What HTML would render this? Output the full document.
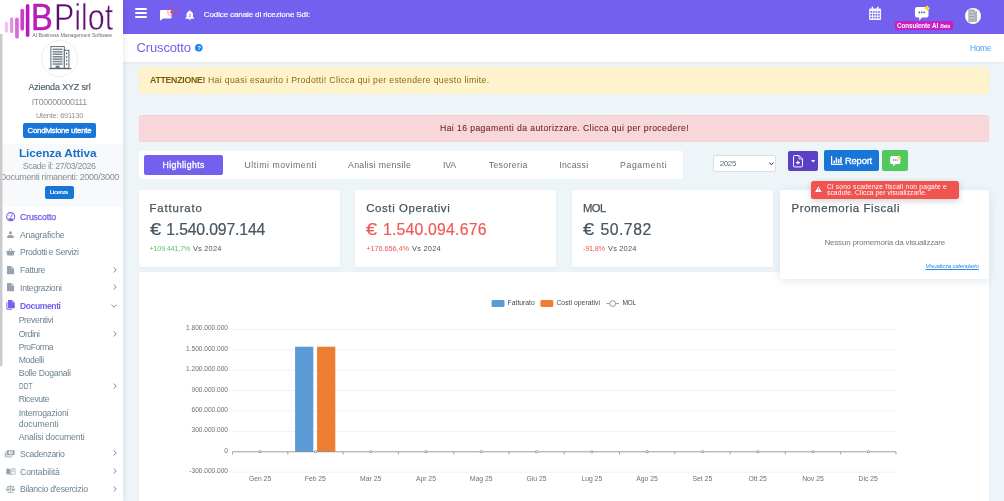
<!DOCTYPE html>
<html lang="it">
<head>
<meta charset="utf-8">
<title>BPilot - Cruscotto</title>
<style>

*{box-sizing:border-box;margin:0;padding:0}
html,body{width:1004px;height:501px;overflow:hidden;background:#eef5f9;font-family:"Liberation Sans",sans-serif}
#app{position:relative;width:1004px;height:501px;overflow:hidden;background:#eef5f9;will-change:transform}
.t{position:absolute;white-space:nowrap;display:block}
.abs{position:absolute}
.card{position:absolute;background:#fff;border-radius:2px;box-shadow:0 1px 3px rgba(120,140,160,.10)}
svg{position:absolute;overflow:visible}

</style>
</head>
<body>
<div id="app">
<main>
<div class="card" style="left:139px;top:272.4px;width:850.4px;height:240px"></div>
<svg style="left:0;top:0" width="1004" height="501" viewBox="0 0 1004 501"><line x1="232.5" y1="329.4" x2="896.0" y2="329.4" stroke="#ebeff6" stroke-width="0.85"/><line x1="232.5" y1="349.8" x2="896.0" y2="349.8" stroke="#ebeff6" stroke-width="0.85"/><line x1="232.5" y1="370.2" x2="896.0" y2="370.2" stroke="#ebeff6" stroke-width="0.85"/><line x1="232.5" y1="390.6" x2="896.0" y2="390.6" stroke="#ebeff6" stroke-width="0.85"/><line x1="232.5" y1="411.0" x2="896.0" y2="411.0" stroke="#ebeff6" stroke-width="0.85"/><line x1="232.5" y1="431.4" x2="896.0" y2="431.4" stroke="#ebeff6" stroke-width="0.85"/><line x1="232.5" y1="472.2" x2="896.0" y2="472.2" stroke="#ebeff6" stroke-width="0.85"/><rect x="295.1" y="346.7" width="18.2" height="105.1" fill="#5b9bd5"/><rect x="317.1" y="346.7" width="18.2" height="105.1" fill="#ed7d31"/><line x1="232.5" y1="451.8" x2="896.0" y2="451.8" stroke="#7d8790" stroke-width="0.8"/><line x1="232.5" y1="451.8" x2="232.5" y2="454.6" stroke="#7d8790" stroke-width="0.7"/><line x1="287.8" y1="451.8" x2="287.8" y2="454.6" stroke="#7d8790" stroke-width="0.7"/><line x1="343.1" y1="451.8" x2="343.1" y2="454.6" stroke="#7d8790" stroke-width="0.7"/><line x1="398.4" y1="451.8" x2="398.4" y2="454.6" stroke="#7d8790" stroke-width="0.7"/><line x1="453.7" y1="451.8" x2="453.7" y2="454.6" stroke="#7d8790" stroke-width="0.7"/><line x1="509.0" y1="451.8" x2="509.0" y2="454.6" stroke="#7d8790" stroke-width="0.7"/><line x1="564.2" y1="451.8" x2="564.2" y2="454.6" stroke="#7d8790" stroke-width="0.7"/><line x1="619.5" y1="451.8" x2="619.5" y2="454.6" stroke="#7d8790" stroke-width="0.7"/><line x1="674.8" y1="451.8" x2="674.8" y2="454.6" stroke="#7d8790" stroke-width="0.7"/><line x1="730.1" y1="451.8" x2="730.1" y2="454.6" stroke="#7d8790" stroke-width="0.7"/><line x1="785.4" y1="451.8" x2="785.4" y2="454.6" stroke="#7d8790" stroke-width="0.7"/><line x1="840.7" y1="451.8" x2="840.7" y2="454.6" stroke="#7d8790" stroke-width="0.7"/><line x1="896.0" y1="451.8" x2="896.0" y2="454.6" stroke="#7d8790" stroke-width="0.7"/><circle cx="260.1" cy="451.7" r="1.15" fill="#fff" stroke="#7a8088" stroke-width="0.75"/><circle cx="315.4" cy="451.7" r="1.15" fill="#fff" stroke="#7a8088" stroke-width="0.75"/><circle cx="370.7" cy="451.7" r="1.15" fill="#fff" stroke="#7a8088" stroke-width="0.75"/><circle cx="426.0" cy="451.7" r="1.15" fill="#fff" stroke="#7a8088" stroke-width="0.75"/><circle cx="481.3" cy="451.7" r="1.15" fill="#fff" stroke="#7a8088" stroke-width="0.75"/><circle cx="536.6" cy="451.7" r="1.15" fill="#fff" stroke="#7a8088" stroke-width="0.75"/><circle cx="591.9" cy="451.7" r="1.15" fill="#fff" stroke="#7a8088" stroke-width="0.75"/><circle cx="647.2" cy="451.7" r="1.15" fill="#fff" stroke="#7a8088" stroke-width="0.75"/><circle cx="702.5" cy="451.7" r="1.15" fill="#fff" stroke="#7a8088" stroke-width="0.75"/><circle cx="757.8" cy="451.7" r="1.15" fill="#fff" stroke="#7a8088" stroke-width="0.75"/><circle cx="813.1" cy="451.7" r="1.15" fill="#fff" stroke="#7a8088" stroke-width="0.75"/><circle cx="868.4" cy="451.7" r="1.15" fill="#fff" stroke="#7a8088" stroke-width="0.75"/><rect x="491.6" y="300" width="12.9" height="7.1" rx="1.4" fill="#5b9bd5"/><rect x="540.4" y="300" width="12.9" height="7.1" rx="1.4" fill="#ed7d31"/><line x1="606.4" y1="303.6" x2="619" y2="303.6" stroke="#7a8088" stroke-width="0.8"/><circle cx="612.7" cy="303.6" r="2.9" fill="#fff" stroke="#7a8088" stroke-width="0.8"/></svg>
<span class="t" style="left:186.07px;top:325.01px;font-size:6.55px;line-height:6.55px;color:#6e7079;">1.800.000.000</span>
<span class="t" style="left:186.07px;top:346.00px;font-size:6.55px;line-height:6.55px;color:#6e7079;">1.500.000.000</span>
<span class="t" style="left:186.07px;top:366.01px;font-size:6.55px;line-height:6.55px;color:#6e7079;">1.200.000.000</span>
<span class="t" style="left:191.52px;top:387.00px;font-size:6.55px;line-height:6.55px;color:#6e7079;">900.000.000</span>
<span class="t" style="left:191.52px;top:407.00px;font-size:6.55px;line-height:6.55px;color:#6e7079;">600.000.000</span>
<span class="t" style="left:191.52px;top:427.01px;font-size:6.55px;line-height:6.55px;color:#6e7079;">300.000.000</span>
<span class="t" style="left:224.28px;top:448.00px;font-size:6.55px;line-height:6.55px;color:#6e7079;">0</span>
<span class="t" style="left:189.35px;top:468.01px;font-size:6.55px;line-height:6.55px;color:#6e7079;">-300.000.000</span>
<span class="t" style="left:248.89px;top:476.01px;font-size:6.8px;line-height:6.8px;color:#6e7079;">Gen 25</span>
<span class="t" style="left:304.74px;top:476.01px;font-size:6.8px;line-height:6.8px;color:#6e7079;">Feb 25</span>
<span class="t" style="left:360.04px;top:476.01px;font-size:6.8px;line-height:6.8px;color:#6e7079;">Mar 25</span>
<span class="t" style="left:415.90px;top:476.01px;font-size:6.8px;line-height:6.8px;color:#6e7079;">Apr 25</span>
<span class="t" style="left:469.87px;top:476.01px;font-size:6.8px;line-height:6.8px;color:#6e7079;">Mag 25</span>
<span class="t" style="left:526.48px;top:476.01px;font-size:6.8px;line-height:6.8px;color:#6e7079;">Giu 25</span>
<span class="t" style="left:581.39px;top:476.01px;font-size:6.8px;line-height:6.8px;color:#6e7079;">Lug 25</span>
<span class="t" style="left:636.30px;top:476.01px;font-size:6.8px;line-height:6.8px;color:#6e7079;">Ago 25</span>
<span class="t" style="left:692.54px;top:476.01px;font-size:6.8px;line-height:6.8px;color:#6e7079;">Set 25</span>
<span class="t" style="left:748.40px;top:476.01px;font-size:6.8px;line-height:6.8px;color:#6e7079;">Ott 25</span>
<span class="t" style="left:802.18px;top:476.01px;font-size:6.8px;line-height:6.8px;color:#6e7079;">Nov 25</span>
<span class="t" style="left:858.61px;top:476.01px;font-size:6.8px;line-height:6.8px;color:#6e7079;">Dic 25</span>
<span class="t" style="left:507.60px;top:300.01px;font-size:6.8px;line-height:6.8px;color:#444a50;letter-spacing:-0.003px;">Fatturato</span>
<span class="t" style="left:556.40px;top:300.01px;font-size:6.8px;line-height:6.8px;color:#444a50;letter-spacing:0.031px;">Costi operativi</span>
<span class="t" style="left:622.40px;top:300.01px;font-size:6.64px;line-height:6.64px;color:#444a50;letter-spacing:-0.337px;">MOL</span>
<div class="card" style="left:139.0px;top:190px;width:201.0px;height:77px"></div>
<div class="card" style="left:355.4px;top:190px;width:201.0px;height:77px"></div>
<div class="card" style="left:572.0px;top:190px;width:200.8px;height:77px"></div>
<span class="t" style="left:149.50px;top:203.01px;font-size:11.4px;line-height:11.4px;color:#46555f;letter-spacing:0.843px;-webkit-text-stroke:0.25px #46555f;">Fatturato</span>
<span class="t" style="left:149.50px;top:222.00px;font-size:15.8px;line-height:15.8px;color:#46555f;transform:scaleX(1.2651);transform-origin:0 0;-webkit-text-stroke:0.2px #46555f;">€</span>
<span class="t" style="left:166.30px;top:222.00px;font-size:15.8px;line-height:15.8px;color:#46555f;letter-spacing:-0.170px;-webkit-text-stroke:0.2px #46555f;">1.540.097.144</span>
<span class="t" style="left:149.50px;top:245.00px;font-size:7.4px;line-height:7.4px;color:#5fc46a;letter-spacing:-0.301px;">+109.441,7%</span>
<span class="t" style="left:193.00px;top:245.00px;font-size:7.4px;line-height:7.4px;color:#46555f;letter-spacing:0.198px;">Vs 2024</span>
<span class="t" style="left:366.20px;top:203.01px;font-size:11.4px;line-height:11.4px;color:#46555f;letter-spacing:0.631px;-webkit-text-stroke:0.25px #46555f;">Costi Operativi</span>
<span class="t" style="left:366.00px;top:222.00px;font-size:15.8px;line-height:15.8px;color:#ee5a58;transform:scaleX(1.2651);transform-origin:0 0;-webkit-text-stroke:0.2px #ee5a58;">€</span>
<span class="t" style="left:382.90px;top:222.00px;font-size:15.8px;line-height:15.8px;color:#ee5a58;letter-spacing:0.213px;-webkit-text-stroke:0.2px #ee5a58;">1.540.094.676</span>
<span class="t" style="left:366.20px;top:245.00px;font-size:7.4px;line-height:7.4px;color:#ee5a58;letter-spacing:-0.091px;">+176.656,4%</span>
<span class="t" style="left:412.00px;top:245.00px;font-size:7.4px;line-height:7.4px;color:#46555f;letter-spacing:0.248px;">Vs 2024</span>
<span class="t" style="left:583.00px;top:203.00px;font-size:11.24px;line-height:11.24px;color:#46555f;letter-spacing:-0.556px;-webkit-text-stroke:0.25px #46555f;">MOL</span>
<span class="t" style="left:582.70px;top:222.00px;font-size:15.8px;line-height:15.8px;color:#46555f;transform:scaleX(1.2651);transform-origin:0 0;-webkit-text-stroke:0.2px #46555f;">€</span>
<span class="t" style="left:600.50px;top:222.00px;font-size:15.8px;line-height:15.8px;color:#46555f;letter-spacing:0.471px;-webkit-text-stroke:0.2px #46555f;">50.782</span>
<span class="t" style="left:583.00px;top:245.00px;font-size:7.4px;line-height:7.4px;color:#ee5a58;letter-spacing:-0.270px;">-91,8%</span>
<span class="t" style="left:608.00px;top:245.00px;font-size:7.4px;line-height:7.4px;color:#46555f;letter-spacing:0.198px;">Vs 2024</span>
<div class="card" style="left:780.2px;top:190px;width:209.2px;height:88.6px;box-shadow:0 2px 8px rgba(90,110,130,.16)"></div>
<span class="t" style="left:791.50px;top:203.01px;font-size:11.4px;line-height:11.4px;color:#46555f;letter-spacing:0.620px;-webkit-text-stroke:0.25px #46555f;">Promemoria Fiscali</span>
<span class="t" style="left:824.50px;top:239.01px;font-size:8px;line-height:8px;color:#6f7c83;letter-spacing:-0.204px;">Nessun promemoria da visualizzare</span>
<span class="t" style="left:925.50px;top:263.00px;font-size:6.2px;line-height:6.2px;color:#2a8be6;letter-spacing:-0.229px;font-style:italic;text-decoration:underline;">Visualizza calendario</span>
<div class="abs" style="left:810.6px;top:180.6px;width:148.3px;height:18px;background:#ef5451;border-radius:2.5px;box-shadow:0 2px 6px rgba(0,0,0,.18)"></div>
<svg style="left:815.2px;top:186.2px" width="6.8" height="6.2" viewBox="0 0 14 13"><path d="M7 0.4 L13.8 12.6 H0.2 Z" fill="#fff"/><rect x="6.3" y="4.4" width="1.4" height="4.4" fill="#ef5451"/><rect x="6.3" y="9.8" width="1.4" height="1.4" fill="#ef5451"/></svg>
<span class="t" style="left:827.00px;top:184.01px;font-size:6.6px;line-height:6.6px;color:#ffffff;letter-spacing:0.239px;">Ci sono scadenze fiscali non pagate e</span>
<span class="t" style="left:827.00px;top:190.00px;font-size:6.6px;line-height:6.6px;color:#ffffff;letter-spacing:0.127px;">scadute. Clicca per visualizzarle.</span>
<div class="abs" style="left:139px;top:67px;width:850.4px;height:27px;background:#fff3cd;border:1px solid #fff0c4;border-radius:2.5px"></div>
<span class="t" style="left:150.00px;top:76.01px;font-size:8.7px;line-height:8.7px;color:#7a5c05;font-weight:700;letter-spacing:-0.236px;">ATTENZIONE!</span>
<span class="t" style="left:208.00px;top:76.01px;font-size:8.7px;line-height:8.7px;color:#8a6a0c;letter-spacing:0.330px;">Hai quasi esaurito i Prodotti! Clicca qui per estendere questo limite.</span>
<div class="abs" style="left:139px;top:115px;width:850.4px;height:26.6px;background:#f8d7da;border:1px solid #f7d0d4;border-radius:2.5px"></div>
<span class="t" style="left:440.00px;top:124.01px;font-size:8.7px;line-height:8.7px;color:#7a2530;letter-spacing:0.380px;-webkit-text-stroke:0.1px #7a2530;">Hai 16 pagamenti da autorizzare. Clicca qui per procedere!</span>
<div class="abs" style="left:139px;top:151.2px;width:543.6px;height:28px;background:#fff;border-radius:2px"></div>
<div class="abs" style="left:144.2px;top:155px;width:79px;height:20.4px;background:#7460ee;border-radius:2px"></div>
<span class="t" style="left:162.50px;top:161.01px;font-size:8.7px;line-height:8.7px;color:#ffffff;letter-spacing:0.410px;-webkit-text-stroke:0.3px #fff;">Highlights</span>
<span class="t" style="left:244.50px;top:161.01px;font-size:8.7px;line-height:8.7px;color:#636f76;letter-spacing:0.547px;">Ultimi movimenti</span>
<span class="t" style="left:348.00px;top:161.01px;font-size:8.7px;line-height:8.7px;color:#636f76;letter-spacing:0.348px;">Analisi mensile</span>
<span class="t" style="left:443.00px;top:161.01px;font-size:8.7px;line-height:8.7px;color:#636f76;letter-spacing:-0.182px;">IVA</span>
<span class="t" style="left:488.70px;top:161.01px;font-size:8.7px;line-height:8.7px;color:#636f76;letter-spacing:0.362px;">Tesoreria</span>
<span class="t" style="left:559.20px;top:161.01px;font-size:8.7px;line-height:8.7px;color:#636f76;letter-spacing:0.314px;">Incassi</span>
<span class="t" style="left:620.00px;top:161.01px;font-size:8.7px;line-height:8.7px;color:#636f76;letter-spacing:0.635px;">Pagamenti</span>
<div class="abs" style="left:712.6px;top:155.4px;width:63.2px;height:16.2px;background:#fff;border:1px solid #d9dee2;border-radius:2px"></div>
<span class="t" style="left:719.70px;top:160.02px;font-size:8.04px;line-height:8.04px;color:#636f76;letter-spacing:-0.403px;">2025</span>
<svg style="left:769.4px;top:161.6px" width="5" height="3.6" viewBox="0 0 10 7"><path d="M1 1 L5 5.4 L9 1" fill="none" stroke="#333" stroke-width="2"/></svg>
<div class="abs" style="left:788.2px;top:151px;width:30px;height:19.6px;background:#5b3fc4;border-radius:2px"></div>
<svg style="left:793.4px;top:154.6px" width="10" height="12.4" viewBox="0 0 20 25"><path d="M3 1 H12 L19 8 V22 A2 2 0 0 1 17 24 H3 A2 2 0 0 1 1 22 V3 A2 2 0 0 1 3 1 Z" fill="none" stroke="#fff" stroke-width="2"/><path d="M12 1 V8 H19" fill="none" stroke="#fff" stroke-width="1.6"/><path d="M10 11.4 V19.4 M6 15.4 H14" stroke="#fff" stroke-width="2.2"/></svg>
<svg style="left:810.8px;top:160.4px" width="4.4" height="2.6" viewBox="0 0 8 5"><path d="M0 0 H8 L4 5 Z" fill="#fff"/></svg>
<div class="abs" style="left:824.2px;top:150px;width:55.1px;height:21.2px;background:#1976d9;border-radius:2px"></div>
<svg style="left:831px;top:156.2px" width="11.8" height="9" viewBox="0 0 24 18"><path d="M1.2 0 V16.8 H24" fill="none" stroke="#fff" stroke-width="2.4"/><rect x="5" y="9" width="3" height="5.4" fill="#fff"/><rect x="9.6" y="3" width="3" height="11.4" fill="#fff"/><rect x="14.2" y="6" width="3" height="8.4" fill="#fff"/><rect x="18.8" y="2" width="3" height="12.4" fill="#fff"/></svg>
<span class="t" style="left:845.00px;top:156.02px;font-size:9.4px;line-height:9.4px;color:#ffffff;letter-spacing:-0.187px;-webkit-text-stroke:0.3px #fff;">Report</span>
<div class="abs" style="left:881.8px;top:150px;width:26px;height:21.2px;background:#52c95f;border-radius:2px"></div>
<svg style="left:889.6px;top:156.0px" width="10.6" height="10.6" viewBox="0 0 27 28"><path d="M4 0 H23 A4 4 0 0 1 27 4 V17 A4 4 0 0 1 23 21 H14 L8.4 27.6 V21 H4 A4 4 0 0 1 0 17 V4 A4 4 0 0 1 4 0 Z" fill="#ffffff"/><circle cx="8.6" cy="10.6" r="1.7" fill="#666"/><circle cx="13.5" cy="10.6" r="1.7" fill="#666"/><circle cx="18.4" cy="10.6" r="1.7" fill="#666"/></svg>
<svg style="left:896.8px;top:154.6px" width="5" height="5" viewBox="0 0 10 10"><path d="M5 0 L6.6 3.4 L10 5 L6.6 6.6 L5 10 L3.4 6.6 L0 5 L3.4 3.4 Z" fill="#ffd43b"/></svg>
</main>
<header class="abs" style="left:123px;top:0;width:881px;height:33.8px;background:#7460ee"></header>
<i class="abs" style="left:135px;top:8.3px;width:11.8px;height:1.7px;background:#fff;border-radius:1px"></i>
<i class="abs" style="left:135px;top:12.2px;width:11.8px;height:1.7px;background:#fff;border-radius:1px"></i>
<i class="abs" style="left:135px;top:16.1px;width:11.8px;height:1.7px;background:#fff;border-radius:1px"></i>
<svg style="left:160px;top:9.5px" width="13" height="11" viewBox="0 0 13 11"><path d="M1 0 H10.6 A1 1 0 0 1 11.6 1 V7.4 A1 1 0 0 1 10.6 8.4 H3 L0 10.8 V1 A1 1 0 0 1 1 0 Z" fill="#fff"/></svg>
<svg style="left:166px;top:5px" width="13" height="13" viewBox="0 0 13 13"><circle cx="6.4" cy="6.5" r="4.6" fill="none" stroke="rgba(240,70,100,.34)" stroke-width="1.7"/><circle cx="5.7" cy="7.1" r="1.55" fill="#f4463f"/></svg>

<svg style="left:185px;top:9.8px" width="9.6" height="10.4" viewBox="0 0 19 21"><path d="M9.5 0.4 A1.5 1.5 0 0 1 11 1.9 V2.6 C14.4 3.4 16 6.2 16 9.6 V14 L18.6 16.6 V17.6 H0.4 V16.6 L3 14 V9.6 C3 6.2 4.6 3.4 8 2.6 V1.9 A1.5 1.5 0 0 1 9.5 0.4 Z M7.4 18.6 H11.6 A2.1 2.1 0 0 1 7.4 18.6 Z" fill="#fff"/><text x="9.5" y="14" font-size="8" font-weight="700" text-anchor="middle" fill="#7460ee" font-family="Liberation Sans, sans-serif">2</text></svg>
<span class="t" style="left:203.80px;top:11.00px;font-size:8px;line-height:8px;color:#ffffff;letter-spacing:-0.114px;-webkit-text-stroke:0.16px #fff;">Codice canale di ricezione SdI:</span>
<svg style="left:869px;top:7.2px" width="12.2" height="13" viewBox="0 0 24 26" opacity=".92"><path d="M5 0.6 A1.6 1.6 0 0 1 8.2 0.6 V3 H15.8 V0.6 A1.6 1.6 0 0 1 19 0.6 V3 H22 A2 2 0 0 1 24 5 V24 A2 2 0 0 1 22 26 H2 A2 2 0 0 1 0 24 V5 A2 2 0 0 1 2 3 H5 Z" fill="#fff"/><rect x="2.6" y="8.4" width="3.2" height="3.2" fill="#7460ee"/><rect x="7.8" y="8.4" width="3.2" height="3.2" fill="#7460ee"/><rect x="13.0" y="8.4" width="3.2" height="3.2" fill="#7460ee"/><rect x="18.2" y="8.4" width="3.2" height="3.2" fill="#7460ee"/><rect x="2.6" y="14.0" width="3.2" height="3.2" fill="#7460ee"/><rect x="7.8" y="14.0" width="3.2" height="3.2" fill="#7460ee"/><rect x="13.0" y="14.0" width="3.2" height="3.2" fill="#7460ee"/><rect x="18.2" y="14.0" width="3.2" height="3.2" fill="#7460ee"/><rect x="2.6" y="19.6" width="3.2" height="3.2" fill="#7460ee"/><rect x="7.8" y="19.6" width="3.2" height="3.2" fill="#7460ee"/><rect x="13.0" y="19.6" width="3.2" height="3.2" fill="#7460ee"/><rect x="18.2" y="19.6" width="3.2" height="3.2" fill="#7460ee"/></svg>
<svg style="left:914.6px;top:6.7px" width="13.5" height="14.0" viewBox="0 0 27 28"><path d="M4 0 H23 A4 4 0 0 1 27 4 V17 A4 4 0 0 1 23 21 H14 L8.4 27.6 V21 H4 A4 4 0 0 1 0 17 V4 A4 4 0 0 1 4 0 Z" fill="#ffffff"/><circle cx="8.6" cy="10.6" r="1.7" fill="#555"/><circle cx="13.5" cy="10.6" r="1.7" fill="#555"/><circle cx="18.4" cy="10.6" r="1.7" fill="#555"/></svg>
<svg style="left:924.4px;top:5.2px" width="6.4" height="6.4" viewBox="0 0 10 10"><path d="M5 0 L6.8 3.2 L10 5 L6.8 6.8 L5 10 L3.2 6.8 L0 5 L3.2 3.2 Z" fill="#ffd92e"/></svg>
<div class="abs" style="left:895.2px;top:21.3px;width:57.6px;height:8.8px;background:#c81fc2;border-radius:1.5px"></div>
<span class="t" style="left:897.10px;top:23.01px;font-size:6.3px;line-height:6.3px;color:#ffffff;font-weight:700;letter-spacing:-0.088px;">Consulente AI</span>
<span class="t" style="left:940.20px;top:25.00px;font-size:4.8px;line-height:4.8px;color:#ffffff;font-weight:700;letter-spacing:-0.113px;font-style:italic;">Beta</span>
<div class="abs" style="left:964.8px;top:7.5px;width:16.5px;height:16.5px;border-radius:50%;background:#fff;overflow:hidden"><svg style="left:3.4px;top:1.4px" width="9.8" height="13.4" viewBox="0 0 10 14"><rect x="0.4" y="0.6" width="6.4" height="12.8" fill="#8f999f"/><rect x="6.8" y="2.2" width="2.6" height="11.2" fill="#aab3b9"/><rect x="1.2" y="1.8" width="4.8" height="0.7" fill="#e4e8ea"/><rect x="1.2" y="3.4" width="4.8" height="0.7" fill="#e4e8ea"/><rect x="1.2" y="5.0" width="4.8" height="0.7" fill="#e4e8ea"/><rect x="1.2" y="6.6" width="4.8" height="0.7" fill="#e4e8ea"/><rect x="1.2" y="8.2" width="4.8" height="0.7" fill="#e4e8ea"/><rect x="1.2" y="9.8" width="4.8" height="0.7" fill="#e4e8ea"/><rect x="1.2" y="11.4" width="4.8" height="0.7" fill="#e4e8ea"/></svg></div>
<div class="abs" style="left:123px;top:33.8px;width:881px;height:28px;background:#fff;box-shadow:0 1px 3px rgba(0,0,0,.05)"></div>
<span class="t" style="left:136.50px;top:41.00px;font-size:13px;line-height:13px;color:#7460ee;letter-spacing:-0.139px;">Cruscotto</span>
<svg style="left:195.3px;top:44.2px" width="7.6" height="7.6" viewBox="0 0 10 10"><circle cx="5" cy="5" r="5" fill="#1a82f0"/></svg>
<span class="t" style="left:197.60px;top:46.01px;font-size:5.6px;line-height:5.6px;color:#ffffff;font-weight:700;">?</span>
<span class="t" style="left:970.00px;top:44.01px;font-size:8.4px;line-height:8.4px;color:#4ba3f0;letter-spacing:-0.295px;">Home</span>
<aside class="abs" style="left:0;top:0;width:123px;height:501px;background:#fff;box-shadow:1px 0 7px rgba(0,0,0,.09)">
<div class="abs" style="left:0;top:0;width:123px;height:40px">
<svg style="left:0;top:0" width="123" height="40" viewBox="0 0 123 40"><rect x="4.90" y="21.80" width="3.00" height="10.60" rx="1.50" fill="#ecbff0"/><rect x="10.10" y="17.20" width="3.10" height="15.80" rx="1.55" fill="#e190e4"/><rect x="15.10" y="17.40" width="3.70" height="21.20" rx="1.85" fill="#d66ad9"/><rect x="20.40" y="8.70" width="3.70" height="21.80" rx="1.85" fill="#c73fca"/><rect x="25.80" y="4.10" width="3.60" height="33.00" rx="1.80" fill="#b61db9"/></svg>
<span class="t" style="left:30.78px;top:0.01px;font-size:36px;line-height:36px;color:#b61db9;transform:scaleX(0.9094);transform-origin:0 0;-webkit-text-stroke:0.5px #b61db9;">B</span>
<span class="t" style="left:53.90px;top:-0.01px;font-size:36.6px;line-height:36.6px;color:#5c0f6e;transform:scaleX(0.8324);transform-origin:0 0;-webkit-text-stroke:0.55px #fff;">Pilot</span>
<span class="t" style="left:32.20px;top:33.02px;font-size:5.3px;line-height:5.3px;color:#6f6f6f;letter-spacing:-0.093px;">AI Business Management Software</span>
</div>
<div class="abs" style="left:41px;top:39.5px;width:37px;height:37px;border-radius:50%;border:1px solid #eeeeee;background:#fff"></div>
<svg style="left:48.6px;top:45.6px" width="22.4" height="23.4" viewBox="0 0 22.4 23.4"><rect x="1.9" y="0.6" width="13.4" height="21.6" fill="#fff" stroke="#4d5d6c" stroke-width="0.9"/><rect x="15.3" y="4.2" width="4.6" height="18" fill="#fff" stroke="#4d5d6c" stroke-width="0.9"/><rect x="3.6" y="2.6" width="10" height="1.5" fill="#4d5d6c" opacity=".75"/><rect x="3.6" y="5.1" width="10" height="1.5" fill="#4d5d6c" opacity=".75"/><rect x="3.6" y="7.5" width="10" height="1.5" fill="#4d5d6c" opacity=".75"/><rect x="3.6" y="10.0" width="10" height="1.5" fill="#4d5d6c" opacity=".75"/><rect x="3.6" y="12.4" width="10" height="1.5" fill="#4d5d6c" opacity=".75"/><rect x="3.6" y="14.8" width="10" height="1.5" fill="#4d5d6c" opacity=".75"/><rect x="3.6" y="17.3" width="10" height="1.5" fill="#4d5d6c" opacity=".75"/><rect x="17" y="6.6" width="1.2" height="1.6" fill="#4d5d6c"/><rect x="17" y="10.2" width="1.2" height="1.6" fill="#4d5d6c"/><rect x="17" y="13.8" width="1.2" height="1.6" fill="#4d5d6c"/><rect x="17" y="17.4" width="1.2" height="1.6" fill="#4d5d6c"/><rect x="6.6" y="19.6" width="4" height="2.6" fill="#4d5d6c" opacity=".8"/><rect x="0" y="22.2" width="22.4" height="1" fill="#4d5d6c"/></svg>
<span class="t" style="left:28.40px;top:83.01px;font-size:9px;line-height:9px;color:#4e5d68;letter-spacing:-0.159px;-webkit-text-stroke:0.15px #4e5d68;">Azienda XYZ srl</span>
<span class="t" style="left:31.80px;top:98.01px;font-size:8.77px;line-height:8.77px;color:#8d9498;letter-spacing:-0.404px;">IT00000000111</span>
<span class="t" style="left:35.90px;top:112.01px;font-size:7.56px;line-height:7.56px;color:#8d9498;letter-spacing:-0.274px;">Utente: 691130</span>
<div class="abs" style="left:22.8px;top:123.4px;width:73.1px;height:14.6px;background:#1976d9;border-radius:2px"></div>
<span class="t" style="left:27.60px;top:127.00px;font-size:7.8px;line-height:7.8px;color:#ffffff;letter-spacing:-0.254px;-webkit-text-stroke:0.3px #fff;">Condivisione utente</span>
<div class="abs" style="left:3px;top:143.6px;width:120px;height:63.3px;background:#f8f9fa"></div>
<span class="t" style="left:19.00px;top:148.01px;font-size:11.8px;line-height:11.8px;color:#1c6fc6;font-weight:700;letter-spacing:-0.102px;">Licenza Attiva</span>
<span class="t" style="left:22.70px;top:162.01px;font-size:8.87px;line-height:8.87px;color:#8a8f93;letter-spacing:-0.398px;">Scade il: 27/03/2026</span>
<span class="t" style="left:-0.30px;top:173.01px;font-size:9px;line-height:9px;color:#8a8f93;letter-spacing:-0.361px;">Documenti rimanenti: 2000/3000</span>
<div class="abs" style="left:45px;top:185.5px;width:29px;height:13px;background:#1976d9;border-radius:2px"></div>
<span class="t" style="left:49.80px;top:190.01px;font-size:5.48px;line-height:5.48px;color:#ffffff;font-weight:700;letter-spacing:-0.287px;">Licenza</span>
<span class="t" style="left:20.00px;top:213.00px;font-size:8.7px;line-height:8.7px;color:#7460ee;letter-spacing:-0.132px;-webkit-text-stroke:0.25px #7460ee;">Cruscotto</span>
<span class="t" style="left:20.00px;top:231.00px;font-size:8.7px;line-height:8.7px;color:#6b8290;letter-spacing:-0.174px;">Anagrafiche</span>
<span class="t" style="left:20.00px;top:248.02px;font-size:8.69px;line-height:8.69px;color:#6b8290;letter-spacing:-0.390px;">Prodotti e Servizi</span>
<span class="t" style="left:20.00px;top:266.01px;font-size:8.7px;line-height:8.7px;color:#6b8290;letter-spacing:-0.367px;">Fatture</span>
<span class="t" style="left:20.00px;top:284.00px;font-size:8.7px;line-height:8.7px;color:#6b8290;letter-spacing:-0.272px;">Integrazioni</span>
<span class="t" style="left:20.00px;top:302.01px;font-size:8.54px;line-height:8.54px;color:#7460ee;font-weight:700;letter-spacing:-0.390px;">Documenti</span>
<span class="t" style="left:18.70px;top:316.01px;font-size:8.7px;line-height:8.7px;color:#6b8290;letter-spacing:-0.381px;">Preventivi</span>
<span class="t" style="left:18.70px;top:330.01px;font-size:8.7px;line-height:8.7px;color:#6b8290;letter-spacing:-0.391px;">Ordini</span>
<span class="t" style="left:18.70px;top:343.00px;font-size:8.47px;line-height:8.47px;color:#6b8290;letter-spacing:-0.407px;">ProForma</span>
<span class="t" style="left:18.70px;top:356.01px;font-size:8.7px;line-height:8.7px;color:#6b8290;letter-spacing:-0.350px;">Modelli</span>
<span class="t" style="left:18.70px;top:369.01px;font-size:8.7px;line-height:8.7px;color:#6b8290;letter-spacing:-0.292px;">Bolle Doganali</span>
<span class="t" style="left:18.70px;top:382.01px;font-size:8.7px;line-height:8.7px;color:#6b8290;transform:scaleX(0.7492);transform-origin:0 0;">DDT</span>
<span class="t" style="left:18.70px;top:395.01px;font-size:8.66px;line-height:8.66px;color:#6b8290;letter-spacing:-0.396px;">Ricevute</span>
<span class="t" style="left:18.70px;top:409.01px;font-size:8.7px;line-height:8.7px;color:#6b8290;letter-spacing:-0.224px;">Interrogazioni</span>
<span class="t" style="left:18.70px;top:420.01px;font-size:8.7px;line-height:8.7px;color:#6b8290;letter-spacing:-0.008px;">documenti</span>
<span class="t" style="left:18.70px;top:433.01px;font-size:8.7px;line-height:8.7px;color:#6b8290;letter-spacing:-0.135px;">Analisi documenti</span>
<span class="t" style="left:20.00px;top:450.00px;font-size:8.7px;line-height:8.7px;color:#6b8290;letter-spacing:-0.347px;">Scadenzario</span>
<span class="t" style="left:20.00px;top:468.00px;font-size:8.7px;line-height:8.7px;color:#6b8290;letter-spacing:-0.123px;">Contabilità</span>
<span class="t" style="left:20.00px;top:485.01px;font-size:8.7px;line-height:8.7px;color:#6b8290;letter-spacing:-0.294px;">Bilancio d'esercizio</span>
<svg style="left:112.8px;top:266.6px" width="4" height="6" viewBox="0 0 4 6"><path d="M0.6 0.5 L3.3 3 L0.6 5.5" fill="none" stroke="#6b8290" stroke-width="0.9"/></svg>
<svg style="left:112.8px;top:284.2px" width="4" height="6" viewBox="0 0 4 6"><path d="M0.6 0.5 L3.3 3 L0.6 5.5" fill="none" stroke="#6b8290" stroke-width="0.9"/></svg>
<svg style="left:112.8px;top:330.6px" width="4" height="6" viewBox="0 0 4 6"><path d="M0.6 0.5 L3.3 3 L0.6 5.5" fill="none" stroke="#6b8290" stroke-width="0.9"/></svg>
<svg style="left:112.8px;top:383.4px" width="4" height="6" viewBox="0 0 4 6"><path d="M0.6 0.5 L3.3 3 L0.6 5.5" fill="none" stroke="#6b8290" stroke-width="0.9"/></svg>
<svg style="left:112.8px;top:449.9px" width="4" height="6" viewBox="0 0 4 6"><path d="M0.6 0.5 L3.3 3 L0.6 5.5" fill="none" stroke="#6b8290" stroke-width="0.9"/></svg>
<svg style="left:112.8px;top:467.9px" width="4" height="6" viewBox="0 0 4 6"><path d="M0.6 0.5 L3.3 3 L0.6 5.5" fill="none" stroke="#6b8290" stroke-width="0.9"/></svg>
<svg style="left:112.8px;top:485.5px" width="4" height="6" viewBox="0 0 4 6"><path d="M0.6 0.5 L3.3 3 L0.6 5.5" fill="none" stroke="#6b8290" stroke-width="0.9"/></svg>
<svg style="left:111.2px;top:304.2px" width="6" height="4" viewBox="0 0 6 4"><path d="M0.5 0.6 L3 3.3 L5.5 0.6" fill="none" stroke="#6b8290" stroke-width="0.9"/></svg>
<svg style="left:5.9px;top:212.1px" width="9.4" height="9.4" viewBox="0 0 18 18"><circle cx="9" cy="9" r="7.8" fill="none" stroke="#7460ee" stroke-width="2"/><path d="M3.4 12.8 C6 11.4 12 11.4 14.6 12.8 C13.6 15.4 11.6 16.4 9 16.4 C6.4 16.4 4.4 15.4 3.4 12.8 Z" fill="#7460ee"/><path d="M9 10.4 L11.6 4.8" stroke="#7460ee" stroke-width="1.7" stroke-linecap="round"/><circle cx="5" cy="7" r="0.9" fill="#7460ee"/><circle cx="13.2" cy="7.4" r="0.9" fill="#7460ee"/></svg>
<svg style="left:6.9px;top:231.2px" width="6.9" height="6.9" viewBox="0 0 14 14"><circle cx="7" cy="3.6" r="3.2" fill="#94a3ad"/><path d="M0.4 14 V11.6 C0.4 9.2 4 8 7 8 C10 8 13.6 9.2 13.6 11.6 V14 Z" fill="#94a3ad"/></svg>
<svg style="left:5.9px;top:248.4px" width="9.0" height="8.0" viewBox="0 0 18 16"><path d="M5 7 L8 1.4 M13 7 L10 1.4" stroke="#94a3ad" stroke-width="1.8" fill="none" stroke-linecap="round"/><path d="M0.4 6 H17.6 V8 H16.8 L15.4 15 H2.6 L1.2 8 H0.4 Z" fill="#94a3ad"/></svg>
<svg style="left:6.9px;top:266.0px" width="7.1" height="8.3" viewBox="0 0 12 14"><path d="M1 0 H7.4 L12 4.6 V13 A1 1 0 0 1 11 14 H1 A1 1 0 0 1 0 13 V1 A1 1 0 0 1 1 0 Z" fill="#94a3ad"/><path d="M7.6 0.6 V4.4 H11.4" fill="none" stroke="#fff" stroke-width="0.9" opacity=".8"/></svg>
<svg style="left:6.9px;top:283.4px" width="7.1" height="8.3" viewBox="0 0 12 14"><path d="M1 0 H7.4 L12 4.6 V13 A1 1 0 0 1 11 14 H1 A1 1 0 0 1 0 13 V1 A1 1 0 0 1 1 0 Z" fill="#94a3ad"/><path d="M7.6 0.6 V4.4 H11.4" fill="none" stroke="#fff" stroke-width="0.9" opacity=".8"/></svg>
<svg style="left:6.0px;top:300.4px" width="8.8" height="10.0" viewBox="0 0 14 16"><path d="M1.4 3.4 V14.8 H10" fill="none" stroke="#7460ee" stroke-width="1.5"/><path d="M4 0 H10 L14 4 V12.4 A0.8 0.8 0 0 1 13.2 13.2 H4 A0.8 0.8 0 0 1 3.2 12.4 V0.8 A0.8 0.8 0 0 1 4 0 Z" fill="#7460ee"/><path d="M10.2 0.6 V3.8 H13.4" fill="none" stroke="#fff" stroke-width="0.9" opacity=".85"/></svg>
<svg style="left:5.2px;top:450.4px" width="9.8" height="7.4" viewBox="0 0 20 15"><rect x="3.4" y="0.4" width="16.2" height="10" rx="1" fill="#94a3ad"/><ellipse cx="11.5" cy="5.4" rx="4.4" ry="3" fill="#fff"/><circle cx="11.5" cy="5.4" r="1.5" fill="#94a3ad"/><path d="M1.4 3.4 V12.2 H16.4 M0.2 5.8 V14.3 H14" fill="none" stroke="#94a3ad" stroke-width="1.3"/></svg>
<svg style="left:5.6px;top:468.0px" width="9.4" height="7.4" viewBox="0 0 19 15"><path d="M0.6 1.6 C3.6 0.6 6.6 0.8 9 2.4 V14 C6.6 12.6 3.6 12.4 0.6 13.2 Z" fill="#94a3ad"/><path d="M10.4 2.4 C12.6 0.8 15.6 0.6 18.4 1.6 V13.2 C15.6 12.4 12.6 12.6 10.4 14 Z" fill="none" stroke="#94a3ad" stroke-width="1.3"/><path d="M12.6 3 V8 L14 7 L15.4 8 V0.6" fill="#fff" stroke="#94a3ad" stroke-width="1"/></svg>
<svg style="left:5.8px;top:485.4px" width="9.2" height="7.8" viewBox="0 0 18 15"><path d="M9 0.6 V13 M2.4 3 H15.6 M3 14.2 H15" fill="none" stroke="#7f909c" stroke-width="1.4"/><path d="M0.6 8.6 L3.6 3.4 L6.6 8.6 Z M11.4 8.6 L14.4 3.4 L17.4 8.6 Z" fill="none" stroke="#7f909c" stroke-width="1"/><path d="M0.4 8.6 H6.8 A3.2 2.6 0 0 1 0.4 8.6 Z M11.2 8.6 H17.6 A3.2 2.6 0 0 1 11.2 8.6 Z" fill="#7f909c"/></svg>
<svg style="left:0;top:34px" width="4" height="333" viewBox="0 0 4 333"><path d="M0 0 H2.5 V330.5 A2 2 0 0 1 0.5 332.5 H0 Z" fill="#cbcbcb"/></svg>
</aside>
</div>
</body>
</html>
